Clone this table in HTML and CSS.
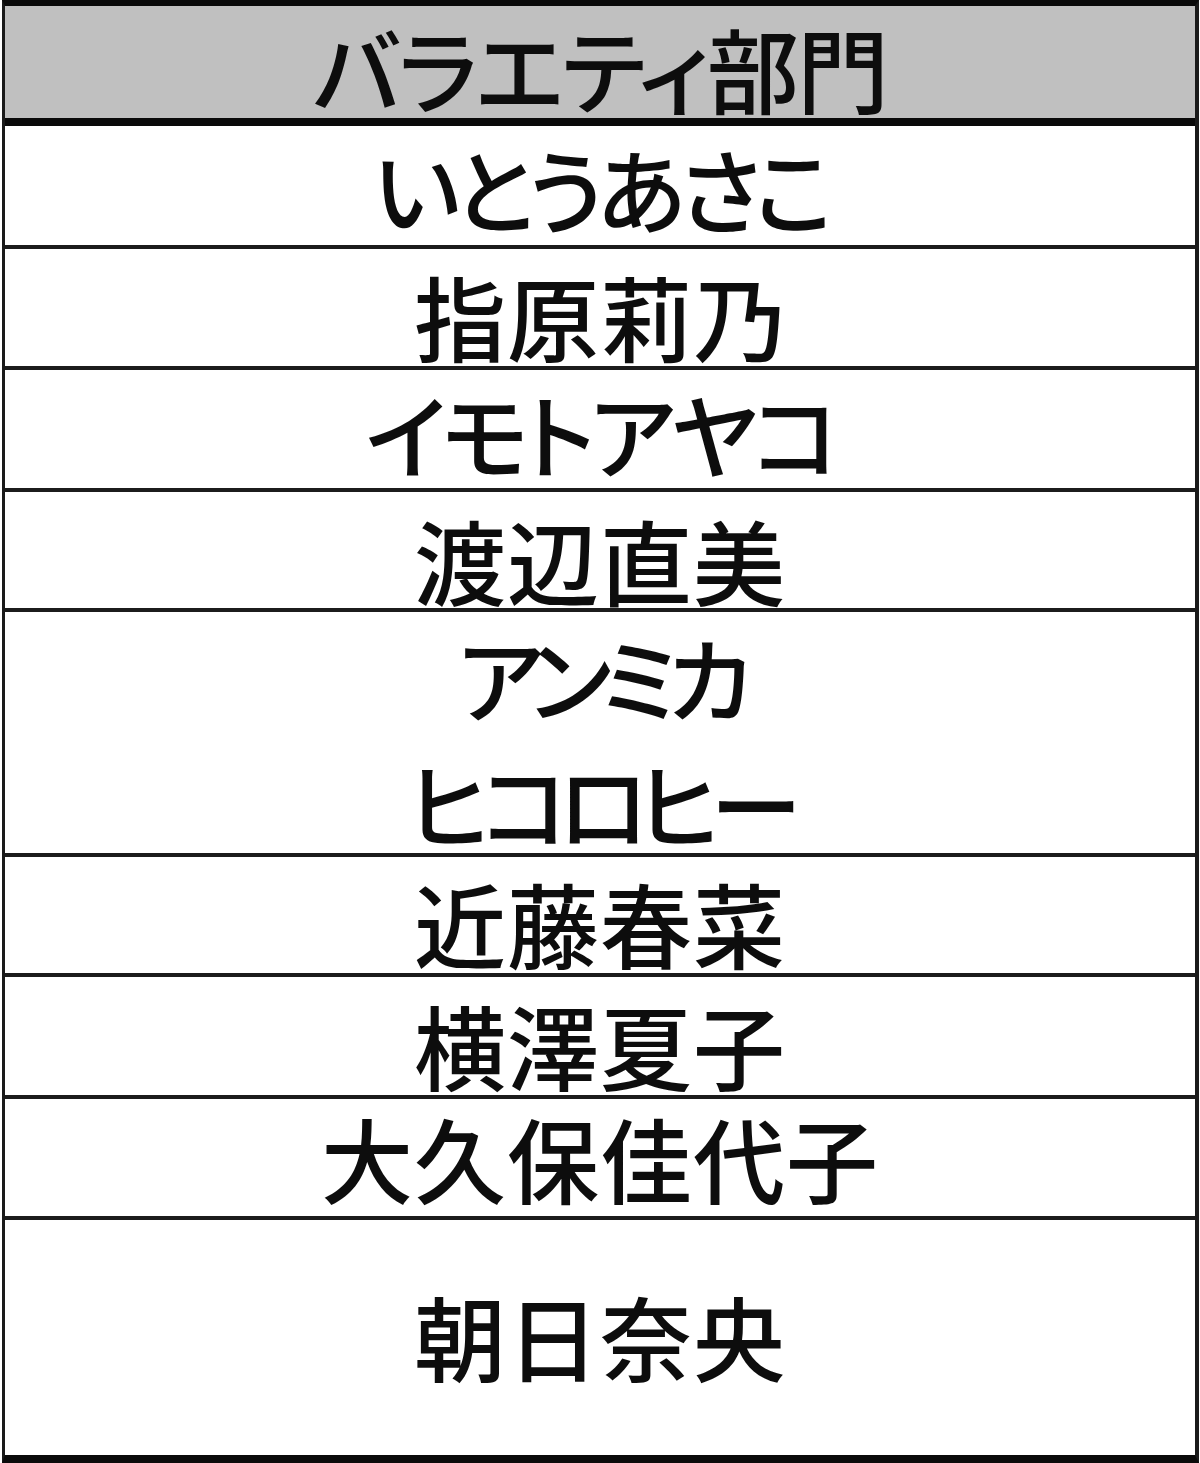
FILE: index.html
```html
<!DOCTYPE html>
<html lang="ja">
<head>
<meta charset="utf-8">
<link rel="stylesheet" href="styles.css">
</head>
<body>
<div class="sheet">
  <div class="head">バラエティ部門</div>
  <div class="row r1 kana-a">いとうあさこ</div>
  <div class="row r2 kanji">指原莉乃</div>
  <div class="row r3 kana-b">イモトアヤコ</div>
  <div class="row r4 kanji">渡辺直美</div>
  <div class="row r5 kana-c"><div class="line">アンミカ</div><div class="line second">ヒコロヒー</div></div>
  <div class="row r6 kanji">近藤春菜</div>
  <div class="row r7 kanji">横澤夏子</div>
  <div class="row r8 kanji">大久保佳代子</div>
  <div class="row r9 kanji last">朝日奈央</div>
</div>
</body>
</html>
```

FILE: styles.css
```css
html, body {
  margin: 0;
  padding: 0;
  background: #ffffff;
}
.sheet {
  margin: 0 1px 0 2px;
  border-top: 6px solid #0a0a0a;
  border-left: 3px solid #1a1a1a;
  border-right: 4px solid #1a1a1a;
  border-bottom: 8px solid #0a0a0a;
  font-family: "Noto Sans CJK JP", "Noto Sans", sans-serif;
  font-feature-settings: "palt";
  font-weight: 500;
  color: #0d0d0d;
  font-size: 92px;
  line-height: 1;
  text-align: center;
}
.head {
  box-sizing: border-box;
  height: 120px;
  background: #c0c0c0;
  border-bottom: 8px solid #0a0a0a;
  padding-top: 15px;
  letter-spacing: -2px;
  white-space: nowrap;
}
.row {
  box-sizing: border-box;
  border-bottom: 4px solid #1c1c1c;
  white-space: nowrap;
}
.kanji { letter-spacing: 1px; }
.kana-a { letter-spacing: -7px; }
.kana-b { letter-spacing: -5px; }
.kana-c { letter-spacing: -10px; }
.r1 { height: 123px; padding-top: 15px; }
.r2 { height: 121px; padding-top: 20px; }
.r3 { height: 122px; padding-top: 16px; }
.r4 { height: 120px; padding-top: 21px; }
.r5 { height: 245px; padding-top: 18px; }
.r5 .second { margin-top: 34px; }
.r6 { height: 120px; padding-top: 19px; }
.r7 { height: 122px; padding-top: 21px; }
.r8 { height: 121px; padding-top: 12px; }
.r9 { height: 235px; padding-top: 69px; }
.last { border-bottom: none; }
```
